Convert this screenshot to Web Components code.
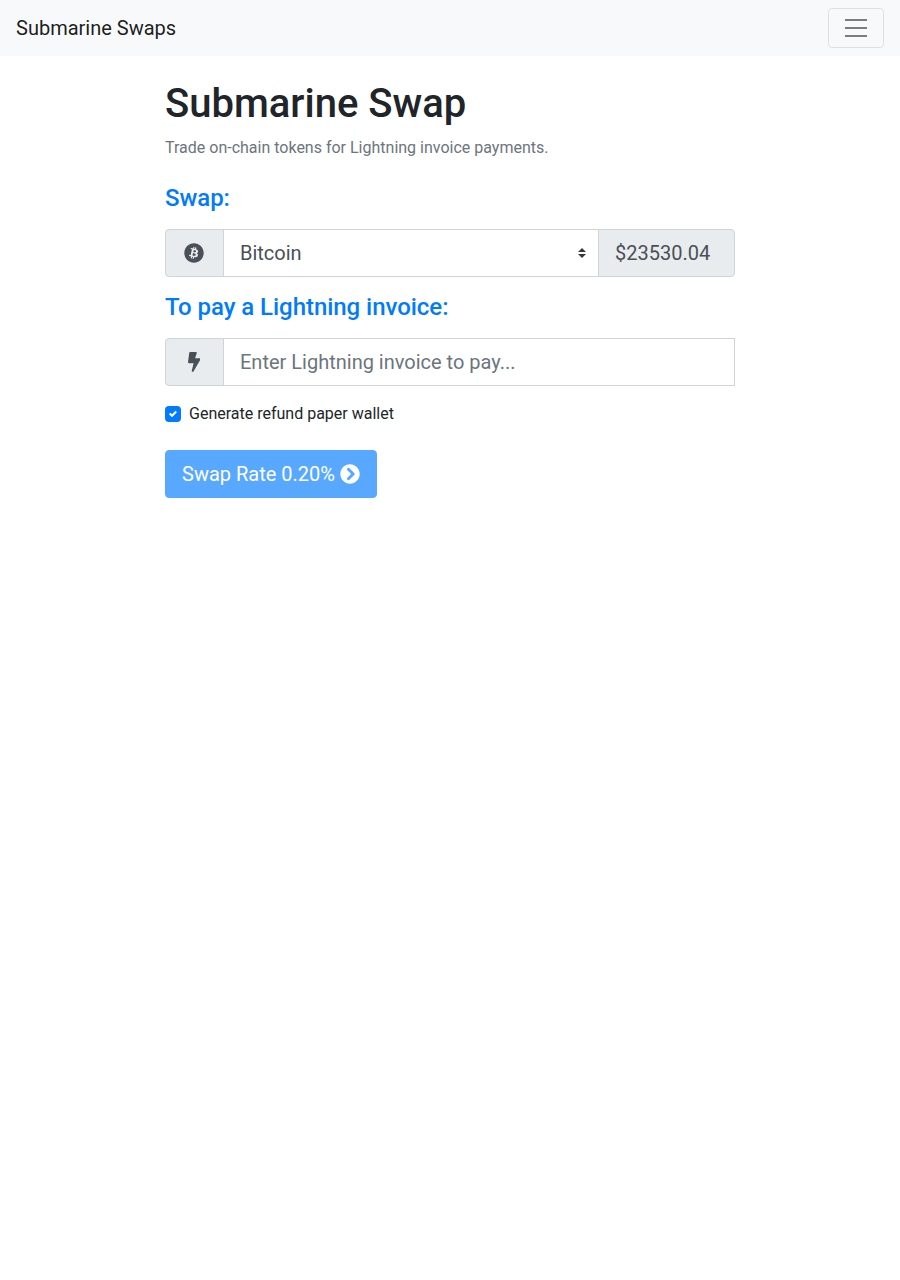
<!DOCTYPE html>
<html lang="en">
<head>
<meta charset="utf-8">
<title>Submarine Swaps</title>
<style>
html,body{margin:0;padding:0;background:#fff}
body{font:400 16px/1.5 Roboto,"Liberation Sans",sans-serif;color:#212529}
</style>
</head>
<body>
<app-navbar>Submarine Swaps</app-navbar>
<swap-page>
  <page-intro heading="Submarine Swap">Trade on-chain tokens for Lightning invoice payments.</page-intro>
  <section-title style="margin-top:24.2px">Swap:</section-title>
  <input-group>
    <group-addon slot="start" icon="bitcoin"></group-addon>
    <network-select></network-select>
    <group-addon slot="end" wide>$23530.04</group-addon>
  </input-group>
  <section-title style="margin-top:16px">To pay a Lightning invoice:</section-title>
  <input-group>
    <group-addon slot="start" icon="bolt"></group-addon>
    <invoice-input placeholder="Enter Lightning invoice to pay..."></invoice-input>
  </input-group>
  <check-field checked>Generate refund paper wallet</check-field>
  <swap-button>Swap Rate 0.20%</swap-button>
</swap-page>
<script>
const ICONS = {
  bitcoin: ['0 0 512 512','M504 256c0 136.967-111.033 248-248 248S8 392.967 8 256 119.033 8 256 8s248 111.033 248 248zm-141.651-35.33c4.937-32.999-20.191-50.739-54.55-62.573l11.146-44.702-27.213-6.781-10.851 43.524c-7.154-1.783-14.502-3.464-21.803-5.13l10.929-43.81-27.198-6.781-11.153 44.686c-5.922-1.349-11.735-2.682-17.377-4.084l.031-.14-37.53-9.37-7.239 29.062s20.191 4.627 19.765 4.913c11.022 2.751 13.014 10.044 12.68 15.825l-12.696 50.925c.76.194 1.744.473 2.829.907-.907-.225-1.876-.473-2.876-.713l-17.796 71.338c-1.349 3.348-4.767 8.37-12.471 6.464.271.395-19.78-4.937-19.78-4.937l-13.51 31.147 35.414 8.827c6.588 1.651 13.045 3.379 19.4 5.006l-11.262 45.213 27.182 6.781 11.153-44.733a1038.209 1038.209 0 0 0 21.697 5.627l-11.115 44.523 27.213 6.781 11.262-45.128c46.404 8.781 81.299 5.239 95.986-36.727 11.836-33.79-.589-53.281-25.004-65.991 17.78-4.098 31.174-15.792 34.747-39.949zm-62.177 87.179c-8.41 33.79-65.308 15.523-83.755 10.943l14.944-59.899c18.446 4.603 77.6 13.717 68.811 48.956zm8.417-87.667c-7.673 30.736-55.031 15.12-70.393 11.292l13.548-54.327c15.363 3.828 64.836 10.973 56.845 43.035z'],
  bolt: ['0 0 320 512','M296 160H180.6l42.6-129.8C227.2 15 215.7 0 200 0H56C44 0 33.8 8.9 32.2 20.8l-32 240C-1.7 275.2 9.5 288 24 288h118.7L96.6 482.5c-3.6 15.2 8 29.5 23.3 29.5 8.4 0 16.4-4.4 20.8-12l176-304c9.3-15.9-2.2-36-20.7-36z'],
  chevron: ['0 0 512 512','M256 8c137 0 248 111 248 248S393 504 256 504 8 393 8 256 119 8 256 8zm113.9 231L234.4 103.5c-9.4-9.4-24.6-9.4-33.9 0l-17 17c-9.4 9.4-9.4 24.6 0 33.9L285.1 256 183.5 357.6c-9.4 9.4-9.4 24.6 0 33.9l17 17c9.4 9.4 24.6 9.4 33.9 0L369.9 273c9.4-9.4 9.4-24.6 0-34z']
};
const icon = (n, w, h) => `<svg width="${w}" height="${h}" viewBox="${ICONS[n][0]}" fill="currentColor" aria-hidden="true"><path d="${ICONS[n][1]}"/></svg>`;
function def(name, render){
  customElements.define(name, class extends HTMLElement{
    constructor(){ super(); this.attachShadow({mode:'open'}); }
    connectedCallback(){ this.shadowRoot.innerHTML = render(this); }
  });
}
def('app-navbar', () => `<style>
:host{display:flex;align-items:center;justify-content:space-between;height:56px;box-sizing:border-box;padding:8px 16px;background:#f8f9fa}
.brand{font-size:20px;line-height:30px;color:rgba(0,0,0,.9);text-decoration:none}
button{width:56px;height:40px;padding:0;background:transparent;border:1px solid rgba(0,0,0,.1);border-radius:4px;display:flex;align-items:center;justify-content:center}
</style><a class="brand" href="#"><slot></slot></a>
<button aria-label="Toggle navigation"><svg width="30" height="30" viewBox="0 0 30 30"><path stroke="rgba(0,0,0,.5)" stroke-width="2" stroke-miterlimit="10" d="M4 7h22M4 15h22M4 23h22"/></svg></button>`);
def('swap-page', () => `<style>
:host{display:block;width:570px;margin:0 auto;padding-top:24px}
</style><slot></slot>`);
def('page-intro', el => `<style>
:host{display:block}
h1{margin:0 0 8px;font-size:40px;line-height:48px;font-weight:500;color:#212529}
p{margin:0;font-size:16px;line-height:24px;color:#6c757d}
</style><h1>${el.getAttribute('heading')}</h1><p><slot></slot></p>`);
def('section-title', () => `<style>
:host{display:block;margin-bottom:16px}
h4{margin:0;font-size:24px;line-height:28.8px;font-weight:500;letter-spacing:-.04px;color:#007bff}
</style><h4><slot></slot></h4>`);
def('input-group', () => `<style>
:host{display:flex;height:48px;align-items:stretch}
</style><slot name="start"></slot><slot></slot><slot name="end"></slot>`);
def('group-addon', el => {
  const ic = el.getAttribute('icon');
  const start = el.getAttribute('slot') === 'start';
  return `<style>
:host{display:flex;align-items:center;box-sizing:border-box;flex:none;height:48px;padding:0 16px;background:#e9ecef;border:1px solid #ced4da;color:#495057;font-size:20px;line-height:30px;
${start ? 'width:59px;justify-content:center;border-radius:4px 0 0 4px;padding:0 1px 0 0;margin-right:-1px;' : 'width:137px;border-radius:0 4px 4px 0;margin-left:-1px;'}}
svg{display:block}
</style>${ic ? icon(ic, ic === 'bolt' ? 12.5 : 20, 20) : ''}<slot></slot>`;
});
def('network-select', () => `<style>
:host{display:block;flex:1;min-width:0}
select{display:block;box-sizing:border-box;width:100%;height:48px;margin:0;padding:0 28px 0 16px;font:400 20px/30px Roboto,"Liberation Sans",sans-serif;color:#495057;background:#fff url("data:image/svg+xml,%3csvg xmlns='http://www.w3.org/2000/svg' width='4' height='5' viewBox='0 0 4 5'%3e%3cpath fill='%23343a40' d='M2 0L0 2h4zm0 5L0 3h4z'/%3e%3c/svg%3e") no-repeat right 12px center/8px 10px;border:1px solid #ced4da;border-radius:0;appearance:none;-webkit-appearance:none}
</style><select aria-label="Network"><option>Bitcoin</option></select>`);
def('invoice-input', el => `<style>
:host{display:block;flex:1;min-width:0}
input{display:block;box-sizing:border-box;width:100%;height:48px;margin:0;padding:8px 16px;font:400 20px/30px Roboto,"Liberation Sans",sans-serif;color:#495057;background:#fff;border:1px solid #ced4da;border-radius:0;outline:0}
input::placeholder{color:#6c757d;opacity:1}
</style><input type="text" placeholder="${el.getAttribute('placeholder')}">`);
def('check-field', () => `<style>
:host{display:flex;align-items:center;gap:8px;margin-top:16px;height:24px;font-size:16px;line-height:24px;color:#212529}
.box{display:flex;align-items:center;justify-content:center;width:16px;height:16px;border-radius:4px;background:#007bff}
</style><span class="box"><svg width="8" height="8" viewBox="0 0 8 8"><path fill="#fff" d="M6.564.75l-3.59 3.612-1.538-1.55L0 4.26 2.974 7.25 8 2.193z"/></svg></span><label><slot></slot></label>`);
def('swap-button', () => `<style>
:host{display:block;margin-top:24px}
button{display:inline-flex;align-items:center;box-sizing:border-box;height:48px;padding:0 16px;font:400 20px/30px Roboto,"Liberation Sans",sans-serif;color:#fff;background:#007bff;border:1px solid #007bff;border-radius:4px;opacity:.65}
svg{display:block;margin-left:5px}
</style><button disabled><slot></slot>${icon('chevron',20,20)}</button>`);
</script>
</body>
</html>
